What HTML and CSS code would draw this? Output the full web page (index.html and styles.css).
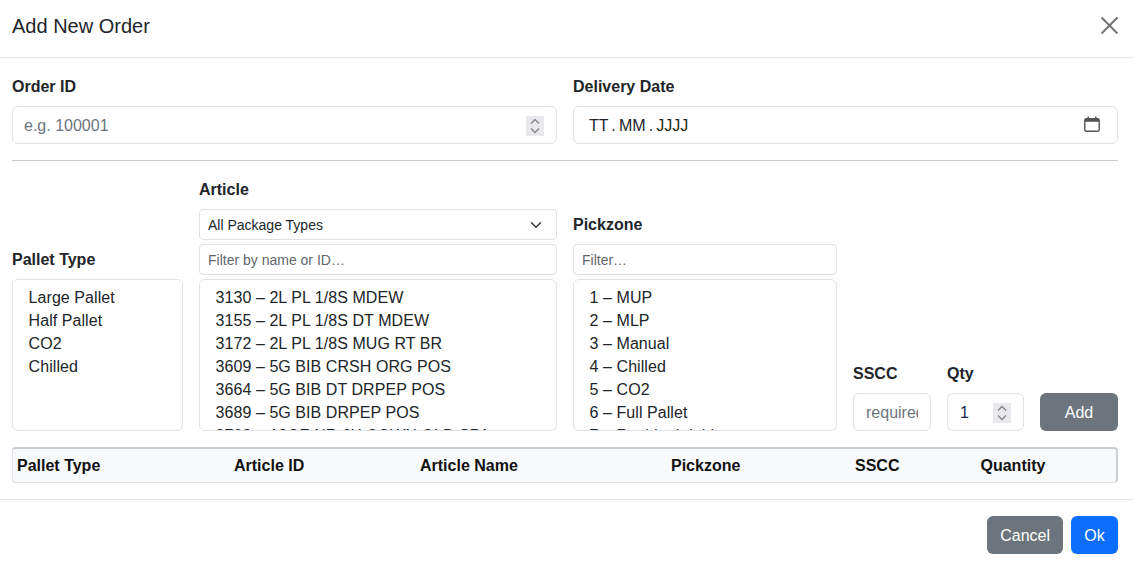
FILE: index.html
```html
<!DOCTYPE html>
<html lang="en">
<head>
<meta charset="utf-8">
<title>Add New Order</title>
<link rel="stylesheet" href="styles.css">
</head>
<body>
<div class="modal">
  <header class="modal-header">
    <h5 class="modal-title">Add New Order</h5>
    <svg class="close" viewBox="0 0 16 16"><path d="M.3.3a1 1 0 0 1 1.4 0L8 6.6 14.3.3a1 1 0 1 1 1.4 1.4L9.4 8l6.3 6.3a1 1 0 0 1-1.4 1.4L8 9.4l-6.3 6.3a1 1 0 0 1-1.4-1.4L6.6 8 .3 1.7a1 1 0 0 1 0-1.4z" fill="#767676"/></svg>
  </header>
  <section class="modal-body">
    <div class="top-row">
      <div class="field">
        <label class="label">Order ID</label>
        <div class="control"><span class="placeholder">e.g. 100001</span>
          <span class="spinner"><svg viewBox="0 0 18 20" width="18" height="20"><path d="M5 7.5 9 3.5l4 4M5 12.5l4 4 4-4" fill="none" stroke="#858585" stroke-width="1.4"/></svg></span>
        </div>
      </div>
      <div class="field">
        <label class="label">Delivery Date</label>
        <div class="control"><span class="date-text">TT . MM . JJJJ</span>
          <svg class="cal" viewBox="0 0 16 16" width="16" height="16"><rect x=".8" y="2.6" width="14.4" height="12.6" rx="1.6" fill="none" stroke="#555" stroke-width="1.4"/><path d="M1 3h14v2.8H1z" fill="#555"/><path d="M4.2 .4v2.5M11.8 .4v2.5" stroke="#555" stroke-width="1.4" fill="none"/></svg>
        </div>
      </div>
    </div>
    <hr class="rule">
    <div class="entry-row">
      <div class="col col-pallet">
        <label class="label">Pallet Type</label>
        <div class="listbox">
          <div>Large Pallet</div><div>Half Pallet</div><div>CO2</div><div>Chilled</div>
        </div>
      </div>
      <div class="col col-article">
        <label class="label">Article</label>
        <div class="select-sm">All Package Types
          <svg viewBox="0 0 16 16" width="16" height="12"><path d="M2 5l6 6 6-6" fill="none" stroke="#343a40" stroke-width="2" stroke-linecap="round" stroke-linejoin="round"/></svg>
        </div>
        <div class="input-sm">Filter by name or ID…</div>
        <div class="listbox">
          <div>3130 – 2L PL 1/8S MDEW</div>
          <div>3155 – 2L PL 1/8S DT MDEW</div>
          <div>3172 – 2L PL 1/8S MUG RT BR</div>
          <div>3609 – 5G BIB CRSH ORG POS</div>
          <div>3664 – 5G BIB DT DRPEP POS</div>
          <div>3689 – 5G BIB DRPEP POS</div>
          <div>3702 – 12OZ NR 6X COWN OLD SPA</div>
        </div>
      </div>
      <div class="col col-zone">
        <label class="label">Pickzone</label>
        <div class="input-sm">Filter…</div>
        <div class="listbox">
          <div>1 – MUP</div><div>2 – MLP</div><div>3 – Manual</div><div>4 – Chilled</div><div>5 – CO2</div><div>6 – Full Pallet</div><div>7 – Residual rigid</div>
        </div>
      </div>
      <div class="col col-sscc">
        <label class="label">SSCC</label>
        <div class="control small-control"><span class="placeholder clip">required</span></div>
      </div>
      <div class="col col-qty">
        <label class="label">Qty</label>
        <div class="control small-control"><span class="qty">1</span>
          <span class="spinner"><svg viewBox="0 0 18 20" width="18" height="20"><path d="M5 7.5 9 3.5l4 4M5 12.5l4 4 4-4" fill="none" stroke="#858585" stroke-width="1.4"/></svg></span>
        </div>
      </div>
      <div class="col col-add"><button class="btn btn-grey btn-add">Add</button></div>
    </div>
    <div class="table">
      <div class="th t1">Pallet Type</div>
      <div class="th t2">Article ID</div>
      <div class="th t3">Article Name</div>
      <div class="th t4">Pickzone</div>
      <div class="th t5">SSCC</div>
      <div class="th t6">Quantity</div>
    </div>
  </section>
  <footer class="modal-footer">
    <button class="btn btn-grey btn-cancel">Cancel</button>
    <button class="btn btn-blue btn-ok">Ok</button>
  </footer>
</div>
</body>
</html>
```
FILE: styles.css
```css
* { box-sizing: border-box; }
html, body { margin: 0; padding: 0; height: 569px; overflow: hidden; }
body { font-family: "Liberation Sans", Arial, sans-serif; font-size: 16px; line-height: 24px; color: #212529; background: #fff; }
.modal { display: flex; flex-direction: column; width: 1133px; }
.modal-header { display: flex; align-items: center; justify-content: space-between; height: 58px; padding: 0 15px 6px 12px; border-bottom: 1px solid #dee2e6; }
.modal-title { margin: 0; font-size: 20px; font-weight: 400; line-height: 30px; }
.close { width: 17px; height: 17px; }
.modal-body { padding: 16px 15px 16px 12px; height: 441px; }
.top-row { display: flex; gap: 16px; }
.field { flex: 1 1 0; }
.label { display: block; font-weight: 700; line-height: 24px; padding-top: 1px; margin-bottom: 7px; }
.control { display: flex; align-items: center; justify-content: space-between; height: 38px; padding: 1px 17px 0 11px; border: 1px solid #dee2e6; border-radius: 6px; background: #fff; }
.top-row .field:first-child .control { padding-right: 12px; }
.placeholder { color: #6c757d; }
.spinner { display: flex; align-items: center; justify-content: center; width: 18px; height: 20px; background: #e9e9ed; }
.date-text { color: #212529; margin-left: 4px; word-spacing: -1.35px; }
.cal { margin-top: -4px; }
.rule { margin: 16px 0; border: 0; border-top: 1px solid #c6c8ca; }
.entry-row { display: flex; gap: 16px; height: 254px; align-items: flex-end; }
.col { display: flex; flex-direction: column; }
.col-pallet { width: 171px; }
.col-article { width: 358px; }
.col-zone { width: 264px; }
.col-sscc { width: 78px; }
.col-qty { width: 77px; }
.col-add { width: 78px; }
.listbox { height: 152px; padding: 6px 15px 6px 15.6px; border: 1px solid #dee2e6; border-radius: 6px; overflow: hidden; line-height: 23px; white-space: nowrap; letter-spacing: .06px; }
.select-sm, .input-sm { display: flex; align-items: center; height: 31px; padding: 0 8px; margin-bottom: 4px; font-size: 14px; border: 1px solid #dee2e6; border-radius: 4px; }
.select-sm { justify-content: space-between; padding-right: 12px; }
.input-sm { color: #5f666d; }
.small-control { padding: 1px 12px 0; }
.clip { display: block; overflow: hidden; white-space: nowrap; }
.qty { color: #16264f; }
.btn { height: 38px; padding: 1px 13px 0; border: 0; border-radius: 6px; font: 16px "Liberation Sans", Arial, sans-serif; color: #fff; }
.btn-grey { background: #6c757d; }
.btn-blue { background: #0d6efd; }
.btn-add { width: 78px; }
.btn-ok { width: 47px; padding: 1px 0 0; }
.table { display: flex; align-items: center; height: 36px; margin-top: 16px; padding: 0 4px; background: #f8f9fa; border: 1px solid #dee2e6; border-top: 2px solid #c9ccd0; border-right: 2px solid #c9ccd0; border-radius: 4px; font-weight: 700; color: #111; }
.th { flex: none; }
.t1 { width: 217px; }
.t2 { width: 186px; }
.t3 { width: 251px; }
.t4 { width: 184px; }
.t5 { width: 125.5px; }
.modal-footer { display: flex; justify-content: flex-end; gap: 8px; height: 70px; padding: 16px 15px; border-top: 1px solid #dee2e6; }
```
